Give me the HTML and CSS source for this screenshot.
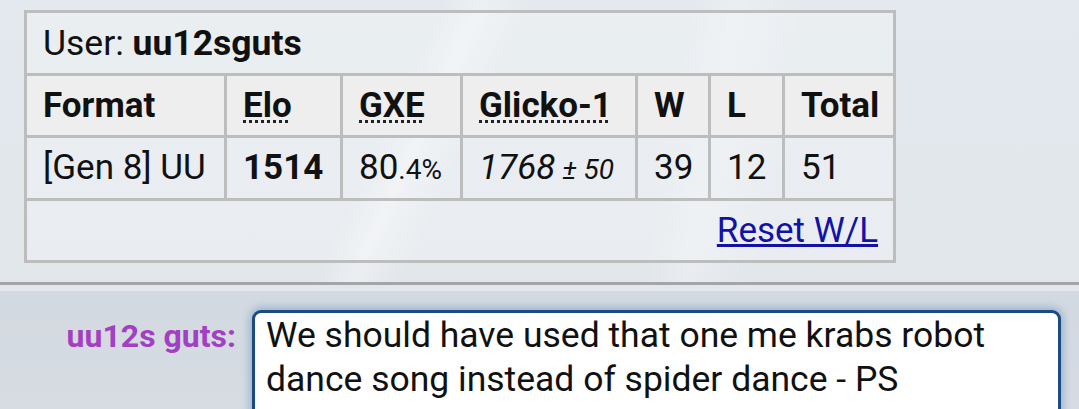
FILE: index.html
```html
<!DOCTYPE html>
<html lang="en">
<head>
    <meta charset="UTF-8">
    <meta name="viewport" content="width=device-width, initial-scale=1.0">
    <title>Ladder - uu12sguts</title>
    <link rel="stylesheet" href="styles.css">
</head>
<body>
    <div class="log">
        <table class="ladder">
            <colgroup>
                <col class="c-format">
                <col class="c-elo">
                <col class="c-gxe">
                <col class="c-glicko">
                <col class="c-w">
                <col class="c-l">
                <col class="c-total">
            </colgroup>
            <tr>
                <td colspan="7" class="user">User: <strong>uu12sguts</strong></td>
            </tr>
            <tr>
                <th>Format</th>
                <th><abbr title="Elo rating">Elo</abbr></th>
                <th><abbr title="user's percentage chance of winning a random battle">GXE</abbr></th>
                <th><abbr title="Glicko-1 rating: rating ± deviation">Glicko-1</abbr></th>
                <th>W</th>
                <th>L</th>
                <th>Total</th>
            </tr>
            <tr>
                <td>[Gen 8] UU</td>
                <td><strong>1514</strong></td>
                <td>80<small>.4%</small></td>
                <td><em>1768<small> ± 50</small></em></td>
                <td>39</td>
                <td>12</td>
                <td>51</td>
            </tr>
            <tr>
                <td colspan="7" class="reset"><a href="#">Reset W/L</a></td>
            </tr>
        </table>
    </div>
    <div class="chatbar">
        <label class="chat-name" for="chat">uu12s guts:</label>
        <div class="chat-box" id="chat">We should have used that one me krabs robot dance song instead of spider dance - PS</div>
    </div>
</body>
</html>
```

FILE: styles.css
```css
html, body {
    margin: 0;
    padding: 0;
    height: 100%;
}
body {
    font-family: Roboto, "Noto Sans", Arial, sans-serif;
    color: #111;
    overflow: hidden;
    background:
        linear-gradient(115deg, rgba(255,255,255,0) 35%, rgba(255,255,255,0.35) 38%, rgba(255,255,255,0) 42%),
        linear-gradient(100deg, rgba(255,255,255,0) 60%, rgba(255,255,255,0.25) 64%, rgba(255,255,255,0) 70%),
        linear-gradient(180deg, #e3e9ee 0%, #e2e7ec 60%, #dde3e8 100%);
}
.log {
    height: 285px;
    padding: 10px 0 0 24px;
    box-sizing: border-box;
    border-bottom: 3px solid #a3a5a8;
}
.ladder {
    border-collapse: collapse;
    table-layout: fixed;
    width: 872px;
}
.c-format { width: 200px; }
.c-elo { width: 116px; }
.c-gxe { width: 120px; }
.c-glicko { width: 175px; }
.c-w { width: 73px; }
.c-l { width: 74px; }
.c-total { width: 111px; }
.ladder td, .ladder th {
    border: 3px solid #bdbdbd;
    height: 62.5px;
    padding: 0 6px 0 16px;
    box-sizing: border-box;
    font-size: 35px;
    text-align: left;
    vertical-align: middle;
    white-space: nowrap;
    background: rgba(255,255,255,0.25);
}
.ladder th {
    background: #eeeeee;
    font-weight: bold;
}
.ladder .user {
    font-size: 35.5px;
}
.ladder abbr {
    text-decoration: underline dotted #222;
    text-decoration-thickness: 3px;
    text-underline-offset: 3px;
}
.ladder small {
    font-size: 80%;
}
.ladder .reset {
    text-align: right;
    padding-right: 15px;
}
.ladder .reset a {
    color: #1212a8;
}
.chatbar {
    display: flex;
    align-items: flex-start;
    gap: 16px;
    padding: 19px 0 0 0;
    height: 124px;
    box-sizing: border-box;
    border-top: 6px solid #e3e7eb;
    background: linear-gradient(180deg, #d3d9e0 0%, #d6dce2 100%);
}
.chat-name {
    width: 236px;
    text-align: right;
    color: #a23fc2;
    font-weight: bold;
    font-size: 32px;
    padding-top: 7px;
}
.chat-box {
    width: 809px;
    box-sizing: border-box;
    background: #fff;
    border: 3px solid #1b4b82;
    border-radius: 9px;
    box-shadow: 0 0 8px 2px rgba(70, 120, 180, 0.45);
    padding: 0 10px 20px 11px;
    font-size: 35.5px;
    line-height: 44px;
    color: #111;
}
```
